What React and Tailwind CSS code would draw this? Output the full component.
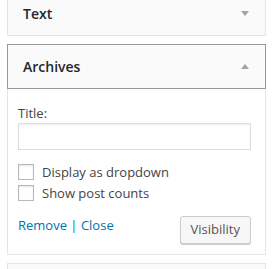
import { useState } from 'react';

function Arrow({ up }) {
  return (
    <svg width="8" height="5" viewBox="0 0 8 5" className="block">
      {up ? <path d="M4 0 L8 5 L0 5 Z" fill="#a0a5aa" /> : <path d="M0 0 L8 0 L4 5 Z" fill="#a0a5aa" />}
    </svg>
  );
}

function Checkbox({ label }) {
  const [checked, setChecked] = useState(false);
  return (
    <label className="flex items-center gap-[8px] h-[16px] cursor-pointer">
      <span
        onClick={() => setChecked(!checked)}
        className="w-[16px] h-[16px] border border-[#b4b9be] bg-white shadow-[inset_0_1px_2px_rgba(0,0,0,0.1)] shrink-0"
      />
      <span className="text-[13px] leading-[16px] text-[#444]">{label}</span>
    </label>
  );
}

export default function App() {
  return (
    <div
      className="w-[276px] h-[269px] overflow-hidden bg-white pl-[7px] pr-[10px]"
      style={{ fontFamily: '"Open Sans", "Liberation Sans", sans-serif' }}
    >
      {/* Text widget (collapsed) */}
      <div className="-mt-[9px] h-[45px] border border-[#e5e5e5] bg-[#fafafa] flex items-center justify-between pl-[15px] pr-[16px]">
        <span className="text-[14px] font-semibold text-[#23282d]">Text</span>
        <Arrow />
      </div>

      {/* Archives widget (open) */}
      <div className="mt-[8px]">
        <div className="h-[45px] border border-[#999] bg-[#fafafa] flex items-center justify-between pl-[15px] pr-[16px]">
          <span className="text-[14px] font-semibold text-[#23282d]">Archives</span>
          <Arrow up />
        </div>
        <div className="border-x border-b border-[#e5e5e5] bg-white pl-[10px] pr-[14px] pt-[15px] pb-[10px]">
          <div className="text-[13px] leading-[18px] text-[#444]">Title:</div>
          <input
            type="text"
            className="mt-[1px] block w-full h-[27px] border border-[#ddd] bg-white shadow-[inset_0_1px_2px_rgba(0,0,0,0.07)] outline-none"
          />
          <div className="mt-[14px] flex flex-col gap-[5px]">
            <Checkbox label="Display as dropdown" />
            <Checkbox label="Show post counts" />
          </div>
          <div className="mt-[15px] flex items-start justify-between">
            <div className="pt-[1px] text-[13px] leading-[16px] text-[#0073aa] whitespace-pre">
              <a href="#" className="text-[#0073aa]">Remove</a>
              {' | '}
              <a href="#" className="text-[#0073aa]">Close</a>
            </div>
            <button className="h-[28px] px-[10px] border border-[#ccc] rounded-[3px] bg-[#f7f7f7] shadow-[0_1px_0_#ccc] text-[13px] text-[#555]">
              Visibility
            </button>
          </div>
        </div>
      </div>

      {/* Next widget */}
      <div className="mt-[8px] h-[45px] border border-[#e5e5e5] bg-[#fafafa]" />
    </div>
  );
}
